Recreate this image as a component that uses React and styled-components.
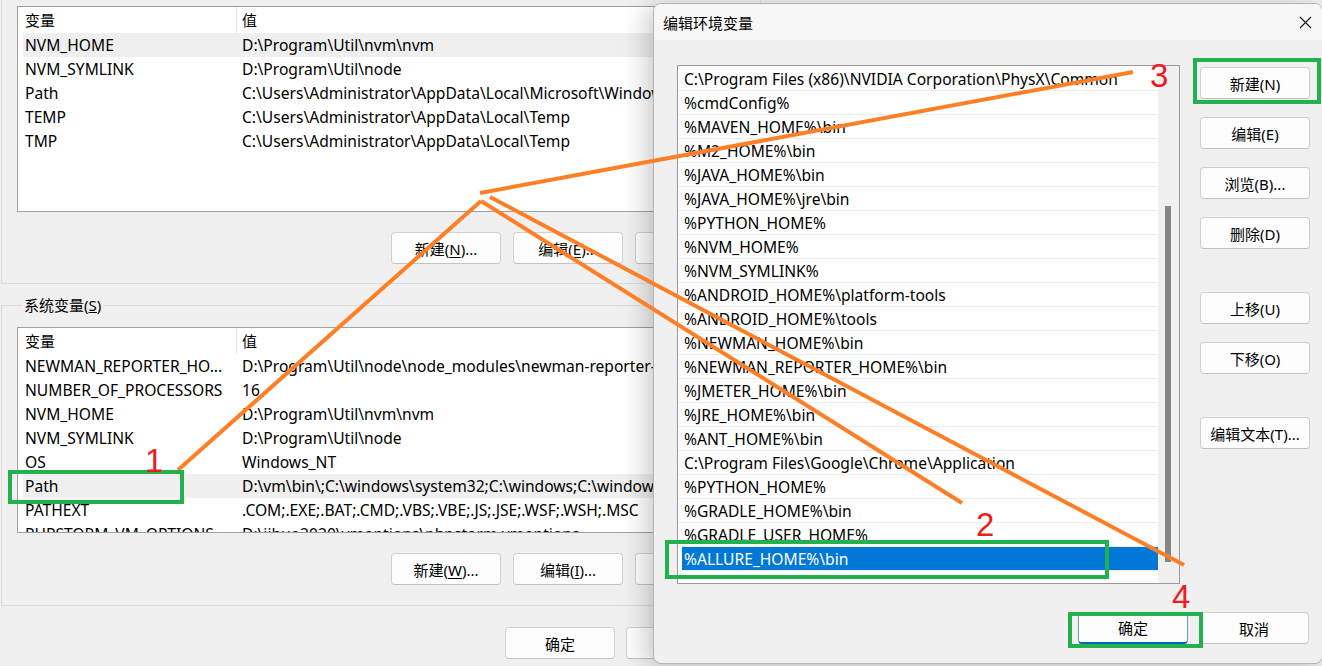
import React from "react";
import styled, { createGlobalStyle } from "styled-components";

const GlobalStyle = createGlobalStyle`
  html, body {
    margin: 0;
    padding: 0;
    background: #f0f0f0;
    overflow: hidden;
  }
  body {
    font-family: "Noto Sans", "Noto Sans CJK SC", sans-serif;
    font-size: 15px;
    color: #000;
  }
`;

const userVars = [
  ["NVM_HOME", "D:\\Program\\Util\\nvm\\nvm"],
  ["NVM_SYMLINK", "D:\\Program\\Util\\node"],
  ["Path", "C:\\Users\\Administrator\\AppData\\Local\\Microsoft\\WindowsApps"],
  ["TEMP", "C:\\Users\\Administrator\\AppData\\Local\\Temp"],
  ["TMP", "C:\\Users\\Administrator\\AppData\\Local\\Temp"],
];

const sysVars = [
  ["NEWMAN_REPORTER_HO...", "D:\\Program\\Util\\node\\node_modules\\newman-reporter-htmlextra"],
  ["NUMBER_OF_PROCESSORS", "16"],
  ["NVM_HOME", "D:\\Program\\Util\\nvm\\nvm"],
  ["NVM_SYMLINK", "D:\\Program\\Util\\node"],
  ["OS", "Windows_NT"],
  ["Path", "D:\\vm\\bin\\;C:\\windows\\system32;C:\\windows;C:\\windows\\System32\\Wbem"],
  ["PATHEXT", ".COM;.EXE;.BAT;.CMD;.VBS;.VBE;.JS;.JSE;.WSF;.WSH;.MSC"],
  ["PHPSTORM_VM_OPTIONS", "D:\\jihuo2020\\vmoptions\\phpstorm.vmoptions"],
];

const paths = [
  "C:\\Program Files (x86)\\NVIDIA Corporation\\PhysX\\Common",
  "%cmdConfig%",
  "%MAVEN_HOME%\\bin",
  "%M2_HOME%\\bin",
  "%JAVA_HOME%\\bin",
  "%JAVA_HOME%\\jre\\bin",
  "%PYTHON_HOME%",
  "%NVM_HOME%",
  "%NVM_SYMLINK%",
  "%ANDROID_HOME%\\platform-tools",
  "%ANDROID_HOME%\\tools",
  "%NEWMAN_HOME%\\bin",
  "%NEWMAN_REPORTER_HOME%\\bin",
  "%JMETER_HOME%\\bin",
  "%JRE_HOME%\\bin",
  "%ANT_HOME%\\bin",
  "C:\\Program Files\\Google\\Chrome\\Application",
  "%PYTHON_HOME%",
  "%GRADLE_HOME%\\bin",
  "%GRADLE_USER_HOME%",
  "%ALLURE_HOME%\\bin",
];

const VarList = ({ vars, active }) => (
  <ListBox>
    <Header>
      <HeadCell>变量</HeadCell>
      <HeadCell $value>值</HeadCell>
    </Header>
    {vars.map(([name, value], i) => (
      <VarRow key={name + i} $active={i === active}>
        <Cell>{name}</Cell>
        <Cell $value>{value}</Cell>
      </VarRow>
    ))}
  </ListBox>
);

export default function App() {
  return (
    <Page>
      <GlobalStyle />
      <BackWindow>
        <UserGroup>
          <VarList vars={userVars} active={0} />
          <ButtonRow>
            <Button>新建(<u>N</u>)...</Button>
            <Button>编辑(<u>E</u>)...</Button>
            <Button>删除(<u>D</u>)</Button>
          </ButtonRow>
        </UserGroup>
        <SysGroup>
          <Legend>系统变量(<u>S</u>)</Legend>
          <VarList vars={sysVars} active={5} />
          <ButtonRow>
            <Button>新建(<u>W</u>)...</Button>
            <Button>编辑(<u>I</u>)...</Button>
            <Button>删除(<u>L</u>)</Button>
          </ButtonRow>
        </SysGroup>
        <BottomRow>
          <Button>确定</Button>
          <Button>取消</Button>
        </BottomRow>
      </BackWindow>

      <Dialog>
        <TitleBar>
          <Title>编辑环境变量</Title>
          <svg width="13" height="13" viewBox="0 0 13 13">
            <path d="M1 1 L12 12 M12 1 L1 12" stroke="#1a1a1a" strokeWidth="1.1" fill="none" />
          </svg>
        </TitleBar>
        <DialogBody>
          <MainRow>
            <PathList>
              <Items>
                {paths.map((p, i) => (
                  <PathRow key={p + i}>
                    <PathCell $selected={i === paths.length - 1}>{p}</PathCell>
                  </PathRow>
                ))}
              </Items>
              <ScrollTrack>
                <Thumb />
              </ScrollTrack>
            </PathList>
            <SideButtons>
              <Button>新建(N)</Button>
              <Button $gap={18}>编辑(E)</Button>
              <Button $gap={18}>浏览(B)...</Button>
              <Button $gap={18}>删除(D)</Button>
              <Button $gap={43}>上移(U)</Button>
              <Button $gap={18}>下移(O)</Button>
              <Button $gap={43}>编辑文本(T)...</Button>
            </SideButtons>
          </MainRow>
          <Footer>
            <Button $primary>确定</Button>
            <Button>取消</Button>
          </Footer>
        </DialogBody>
      </Dialog>

      <Annotations viewBox="0 0 1322 666">
        <g stroke="#ff7f27" strokeWidth="4" fill="none">
          <line x1="178" y1="470" x2="481" y2="201" />
          <line x1="480" y1="193" x2="1133" y2="72" />
          <line x1="481" y1="201" x2="962" y2="503" />
          <line x1="490" y1="197" x2="1184" y2="565" />
        </g>
        <g stroke="#22b14c" strokeWidth="4" fill="none">
          <rect x="10" y="472" width="172" height="30" />
          <rect x="667" y="542" width="440" height="35" />
          <rect x="1195" y="60" width="124" height="42" />
          <rect x="1070" y="614" width="131" height="32" />
        </g>
        <g fill="#ed1c24" fontFamily="Liberation Sans, sans-serif" fontSize="33">
          <text x="145" y="472">1</text>
          <text x="976" y="536">2</text>
          <text x="1150" y="87">3</text>
          <text x="1172" y="608">4</text>
        </g>
      </Annotations>
    </Page>
  );
}

const Page = styled.div`
  position: relative;
  width: 1322px;
  height: 666px;
  overflow: hidden;
  background: #f0f0f0;
`;

const BackWindow = styled.div`
  width: 760px;
  padding-left: 1px;
  display: flex;
  flex-direction: column;
`;

const UserGroup = styled.div`
  border: 1px solid #dcdcdc;
  border-top: none;
  padding: 6px 15px 19px;
`;

const SysGroup = styled.fieldset`
  margin: 11px 0 0;
  padding: 12px 15px 20px;
  border: 1px solid #dcdcdc;
  min-width: 0;
`;

const Legend = styled.legend`
  margin-left: 5px;
  padding: 0 2px;
  line-height: 20px;
`;

const ListBox = styled.div`
  height: 206px;
  box-sizing: border-box;
  border: 1px solid #a0a0a0;
  background: #fff;
  overflow: hidden;
`;

const Header = styled.div`
  display: grid;
  grid-template-columns: 218px 1fr;
  height: 26px;
  line-height: 26px;
`;

const HeadCell = styled.div`
  padding-left: ${(p) => (p.$value ? "5px" : "7px")};
  border-left: ${(p) => (p.$value ? "1px solid #e5e5e5" : "none")};
`;

const VarRow = styled.div`
  display: grid;
  grid-template-columns: 213px 1fr;
  margin-left: 5px;
  height: 24px;
  line-height: 24px;
  font-size: 15.6px;
  white-space: nowrap;
  background: ${(p) => (p.$active ? "#efefef" : "transparent")};
`;

const Cell = styled.div`
  padding-left: ${(p) => (p.$value ? "6px" : "2px")};
  overflow: hidden;
`;

const ButtonRow = styled.div`
  display: flex;
  justify-content: flex-end;
  gap: 12px;
  margin-top: 20px;
`;

const BottomRow = styled.div`
  display: flex;
  justify-content: flex-end;
  gap: 11px;
  margin-top: 21px;
  padding-right: 25px;
`;

const Button = styled.button`
  width: 110px;
  height: 32px;
  flex: none;
  margin-top: ${(p) => (p.$gap ? `${p.$gap}px` : "0")};
  padding: 0;
  font-family: inherit;
  font-size: 15px;
  color: #000;
  background: #fdfdfd;
  border: 1px solid ${(p) => (p.$primary ? "#6f94c9" : "#d0d0d0")};
  border-bottom: ${(p) => (p.$primary ? "2px solid #0067c0" : "1px solid #c2c2c2")};
  border-radius: 4px;
  u {
    text-decoration-thickness: 1px;
    text-underline-offset: 2px;
  }
`;

const Dialog = styled.section`
  position: absolute;
  left: 653px;
  top: 3px;
  width: 670px;
  height: 661px;
  box-sizing: border-box;
  display: flex;
  flex-direction: column;
  background: #f0f0f0;
  border: 1px solid #b4b4b4;
  border-radius: 8px;
  overflow: hidden;
  box-shadow: -6px 4px 26px rgba(0, 0, 0, 0.22);
`;

const TitleBar = styled.div`
  height: 36px;
  flex: none;
  display: flex;
  align-items: center;
  justify-content: space-between;
  padding: 0 10px 0 9px;
  background: #f6f6f6;
`;

const Title = styled.div`
  font-size: 15px;
`;

const DialogBody = styled.div`
  padding: 25px 13px 0 23px;
`;

const MainRow = styled.div`
  display: flex;
  gap: 20px;
`;

const PathList = styled.div`
  width: 503px;
  height: 519px;
  box-sizing: border-box;
  flex: none;
  display: flex;
  border: 1px solid #999;
  background: #fff;
`;

const Items = styled.div`
  flex: 1;
  padding-top: 1px;
  overflow: hidden;
`;

const PathRow = styled.div`
  height: 23px;
  padding-left: 4px;
  border-bottom: 1px solid #ececec;
  display: flex;
`;

const PathCell = styled.div`
  flex: 1;
  padding-left: 2px;
  line-height: 24px;
  font-size: 15.6px;
  white-space: nowrap;
  background: ${(p) => (p.$selected ? "#0078d7" : "transparent")};
  color: ${(p) => (p.$selected ? "#fff" : "#000")};
`;

const ScrollTrack = styled.div`
  width: 21px;
  flex: none;
  background: #f0f0f0;
`;

const Thumb = styled.div`
  width: 6px;
  height: 356px;
  margin: 140px 0 0 7px;
  background: #858585;
`;

const SideButtons = styled.div`
  display: flex;
  flex-direction: column;
  padding-top: 2px;
`;

const Footer = styled.div`
  display: flex;
  justify-content: flex-end;
  gap: 11px;
  margin-top: 28px;
`;

const Annotations = styled.svg`
  position: absolute;
  left: 0;
  top: 0;
  width: 1322px;
  height: 666px;
  pointer-events: none;
`;
